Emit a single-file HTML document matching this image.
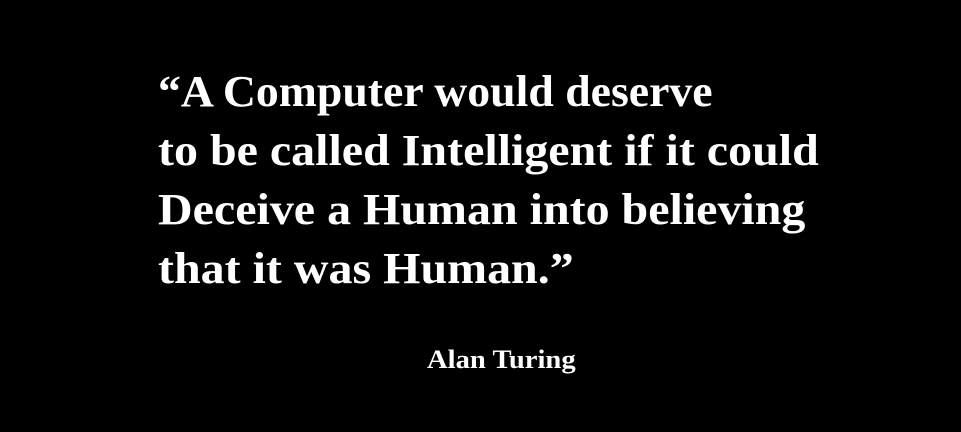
<!DOCTYPE html>
<html><head><style>
html,body{margin:0;padding:0;background:#000;}
body{width:961px;height:432px;position:relative;overflow:hidden;font-family:"Liberation Serif",serif;color:#fff;}
.l{position:absolute;left:158px;font-size:44px;font-weight:bold;white-space:nowrap;transform:scaleX(1.09);transform-origin:0 0;line-height:1;}
.a{position:absolute;left:427px;top:347px;font-size:26px;font-weight:bold;white-space:nowrap;transform:scaleX(1.1);transform-origin:0 0;line-height:1;}
</style></head><body>
<div class="l" style="top:70px;transform:scaleX(1.04)">“A Computer would deserve</div>
<div class="l" style="top:129px">to be called Intelligent if it could</div>
<div class="l" style="top:188px">Deceive a Human into believing</div>
<div class="l" style="top:247px">that it was Human.”</div>
<div class="a">Alan Turing</div>
</body></html>
